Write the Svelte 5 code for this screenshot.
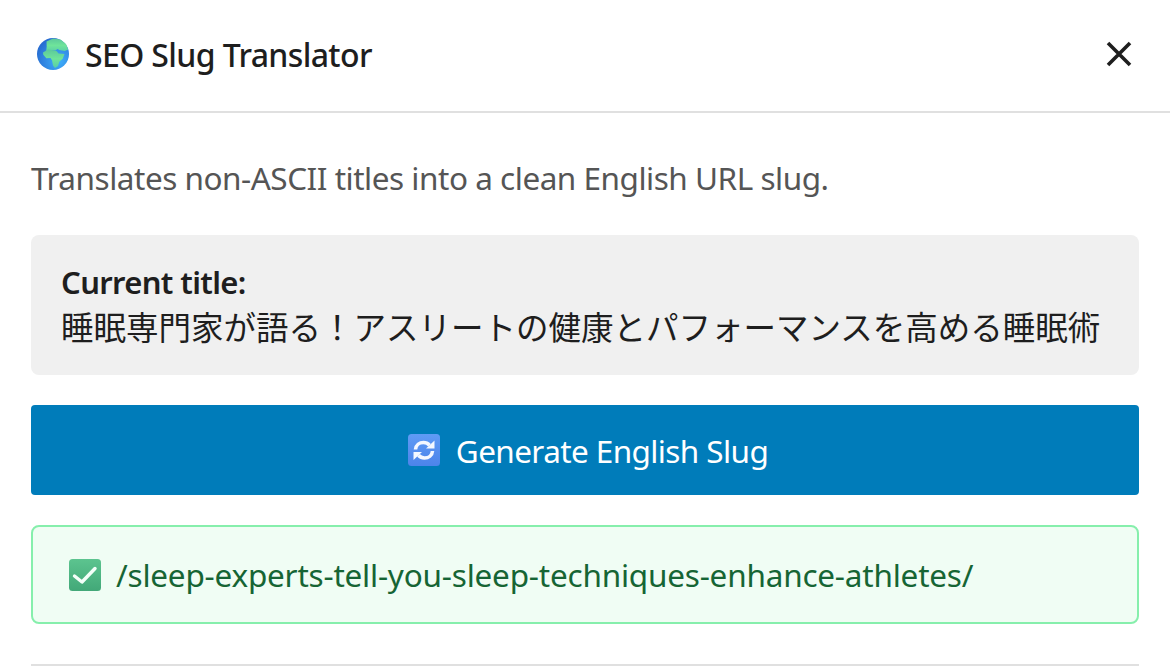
<script>
  let title = "睡眠専門家が語る！アスリートの健康とパフォーマンスを高める睡眠術";
  let slug = "/sleep-experts-tell-you-sleep-techniques-enhance-athletes/";
</script>

<div class="panel">
  <header class="head">
    <h2 class="head-title">
      <svg class="emoji" viewBox="0 0 32 32" aria-hidden="true">
        <defs>
          <radialGradient id="sea" cx="0.68" cy="0.72" r="0.8">
            <stop offset="0" stop-color="#3fb0fb" />
            <stop offset="1" stop-color="#2668cf" />
          </radialGradient>
          <linearGradient id="land" x1="0" y1="0" x2="0" y2="1">
            <stop offset="0" stop-color="#5cc89c" />
            <stop offset="0.5" stop-color="#6fe49a" />
            <stop offset="1" stop-color="#58cca8" />
          </linearGradient>
          <linearGradient id="sync" x1="0" y1="0" x2="0" y2="1">
            <stop offset="0" stop-color="#5f9bf5" />
            <stop offset="1" stop-color="#4c84ea" />
          </linearGradient>
          <linearGradient id="tick" x1="0" y1="0" x2="0" y2="1">
            <stop offset="0" stop-color="#5cc48f" />
            <stop offset="1" stop-color="#42a878" />
          </linearGradient>
        </defs>
        <circle cx="16" cy="16" r="16" fill="url(#sea)" />
        <path d="M9.500 3.500l6.500-3 7.500 1 5.500 4.500 2.200 5.500-3.500 1.500-5.500-1-1.500-1-2.500 1.500-3.500-.5-2 2.500-3.500-1.500.5-4.500z" fill="url(#land)" />
        <path d="M6 14.500l5-3 5.500 .8 3 .7 2 2.500 6 .5-1.800 4.800-3.400 3-1.300 4.200-3 2-2-2.500-1-5.300-1.500-2.200-4.200 .2-3-3.500z" fill="url(#land)" />
      </svg>
      <span class="head-label">SEO Slug Translator</span>
    </h2>
    <button class="close" aria-label="Close">
      <svg viewBox="0 0 36 36" width="36" height="36"><path d="M7 7l22 22M29 7l-22 22" stroke="#1e1e1e" stroke-width="3.600" fill="none" /></svg>
    </button>
  </header>

  <div class="body">
    <p class="desc">Translates non-ASCII titles into a clean English URL slug.</p>

    <div class="current">
      <strong>Current title:</strong>
      <span class="jp">{title}</span>
    </div>

    <button class="generate">
      <svg class="emoji" viewBox="0 0 32 32" aria-hidden="true">
        <rect width="32" height="32" rx="3.500" fill="url(#sync)" />
        <path d="M7.500 15.500c.3-4.500 4-7 8-7 2.500 0 4.500 1 6 2.700" stroke="#f4f8ff" stroke-width="3.600" fill="none" />
        <path d="M18 14.500h8.500v-8z" fill="#f4f8ff" />
        <path d="M24.500 17c-.3 4.500-4 7-8 7-2.500 0-4.500-1-6-2.700" stroke="#f4f8ff" stroke-width="3.600" fill="none" />
        <path d="M14 18h-8.500v8z" fill="#f4f8ff" />
      </svg>
      <span>Generate English Slug</span>
    </button>

    <div class="result">
      <svg class="emoji" viewBox="0 0 32 32" aria-hidden="true">
        <rect width="32" height="32" rx="3.500" fill="url(#tick)" />
        <path d="M5.500 17l7.500 6 13-13.500" stroke="#f4fff9" stroke-width="3.400" stroke-linecap="round" stroke-linejoin="round" fill="none" />
      </svg>
      <span class="slug">{slug}</span>
    </div>

    <div class="rule"></div>
  </div>
</div>

<style>
  :global(body) {
    margin: 0;
    background: #fff;
    overflow: hidden;
  }

  .panel {
    width: 1170px;
    height: 672px;
    font-family: "Noto Sans", "Noto Sans CJK JP", sans-serif;
    color: #1e1e1e;
    overflow: hidden;
  }

  .head {
    display: flex;
    align-items: center;
    justify-content: space-between;
    box-sizing: border-box;
    height: 113px;
    padding: 0 33px 4px 37px;
    border-bottom: 2px solid #e0e0e0;
  }

  .head-title {
    display: flex;
    align-items: center;
    gap: 16px;
    margin: 0;
    font-size: 32px;
    font-weight: 500;
    letter-spacing: -0.63px;
  }

  .head-label {
    padding-top: 1px;
  }

  .emoji {
    width: 32px;
    height: 32px;
    flex-shrink: 0;
  }

  .close {
    display: flex;
    padding: 0;
    border: 0;
    background: none;
    cursor: pointer;
  }

  .body {
    padding: 0 31px;
  }

  .desc {
    margin: 43px 0 35px;
    font-size: 31.500px;
    letter-spacing: -0.48px;
    line-height: 44px;
    color: #555;
  }

  .current {
    display: flex;
    flex-direction: column;
    box-sizing: border-box;
    height: 140px;
    padding: 26px 31px 0;
    background: #f0f0f0;
    border-radius: 8px;
    font-size: 30px;
    line-height: 44px;
  }

  .current strong {
    font-weight: 600;
    font-size: 31px;
    letter-spacing: -0.65px;
    margin: -1px 0 0 -1px;
  }

  .jp {
    font-size: 32.500px;
    margin: 2px 0 0 -1px;
    white-space: nowrap;
  }

  .generate {
    display: flex;
    align-items: center;
    justify-content: center;
    gap: 16px;
    width: 100%;
    height: 90px;
    margin-top: 30px;
    padding: 0 0 0 6px;
    border: 0;
    border-radius: 4px;
    background: #007cba;
    color: #fff;
    font: inherit;
    font-size: 31.500px;
    letter-spacing: -0.6px;
    cursor: pointer;
  }

  .result {
    display: flex;
    align-items: center;
    gap: 15px;
    box-sizing: border-box;
    height: 99px;
    margin-top: 30px;
    padding: 0 36px;
    background: #f0fdf4;
    border: 2px solid #86efac;
    border-radius: 8px;
    font-size: 31.500px;
    letter-spacing: -0.21px;
  }

  .slug {
    color: #166534;
  }

  .rule {
    height: 2px;
    margin-top: 40px;
    background: #e0e0e0;
  }
</style>
